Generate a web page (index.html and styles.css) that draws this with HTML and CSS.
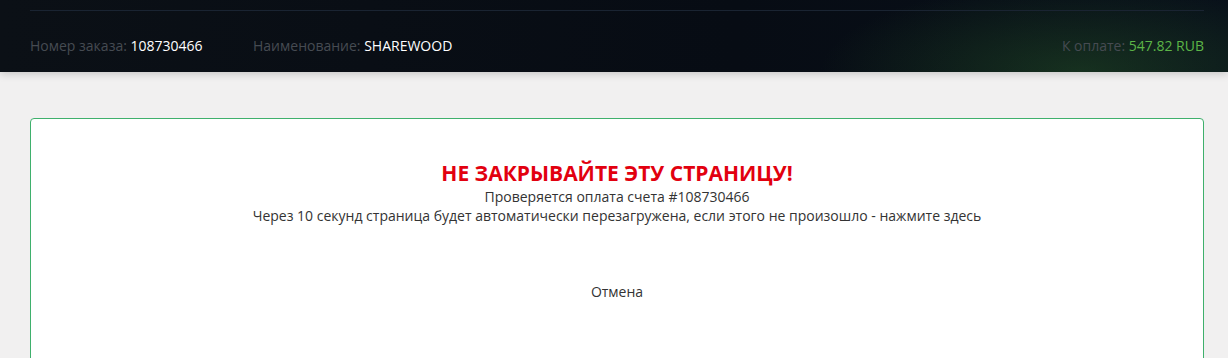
FILE: index.html
```html
<!DOCTYPE html>
<html lang="ru">
<head>
    <meta charset="UTF-8">
    <title>Оплата заказа</title>
    <link rel="stylesheet" href="styles.css">
</head>
<body>
<header class="header">
    <div class="header-inner">
        <div class="header-line"></div>
        <div class="order-info">
            <div class="info-item order-num">Номер заказа: <span class="value">108730466</span></div>
            <div class="info-item">Наименование: <span class="value">SHAREWOOD</span></div>
            <div class="info-item info-sum">К оплате: <span class="value sum">547.82 RUB</span></div>
        </div>
    </div>
</header>

<main class="main">
    <div class="card">
        <h1 class="warning">НЕ ЗАКРЫВАЙТЕ ЭТУ СТРАНИЦУ!</h1>
        <p class="text">Проверяется оплата счета #108730466</p>
        <p class="text">Через 10 секунд страница будет автоматически перезагружена, если этого не произошло - <a href="#" class="link">нажмите здесь</a></p>
        <a href="#" class="cancel">Отмена</a>
    </div>
</main>
</body>
</html>
```

FILE: styles.css
```css
* {
    margin: 0;
    padding: 0;
    box-sizing: border-box;
}

body {
    font-family: "Open Sans", "Liberation Sans", sans-serif;
    background: #f1f0f0;
    color: #333;
    font-size: 14px;
}

.header {
    height: 72px;
    background:
        radial-gradient(ellipse 260px 90px at 1080px 72px, rgba(40, 90, 40, 0.45), rgba(20, 50, 25, 0) 100%),
        linear-gradient(90deg, #0b1016 0%, #070c14 60%, #08101a 100%);
    box-shadow: 0 2px 8px rgba(0, 0, 0, 0.18);
    position: relative;
}

.header-inner {
    padding: 0 24px 0 30px;
}

.header-line {
    height: 11px;
    border-bottom: 1px solid #1a2432;
}

.order-info {
    display: flex;
    align-items: center;
    height: 60px;
    padding-top: 8px;
}

.info-item {
    color: #464b52;
    font-size: 14px;
}

.order-num {
    width: 223px;
}

.info-sum {
    margin-left: auto;
}

.value {
    color: #fff;
}

.value.sum {
    color: #5cb547;
}

.main {
    padding: 46px 24px 0 30px;
}

.card {
    background: #fff;
    border: 1px solid #3fb06c;
    border-radius: 4px;
    min-height: 250px;
    text-align: center;
    padding-top: 40px;
}

.warning {
    color: #e2000f;
    font-size: 21px;
    font-weight: 700;
    line-height: 28px;
}

.text {
    line-height: 19px;
}

.link {
    color: #333;
    text-decoration: none;
}

.cancel {
    display: inline-block;
    margin-top: 57px;
    color: #333;
    text-decoration: none;
}
```
